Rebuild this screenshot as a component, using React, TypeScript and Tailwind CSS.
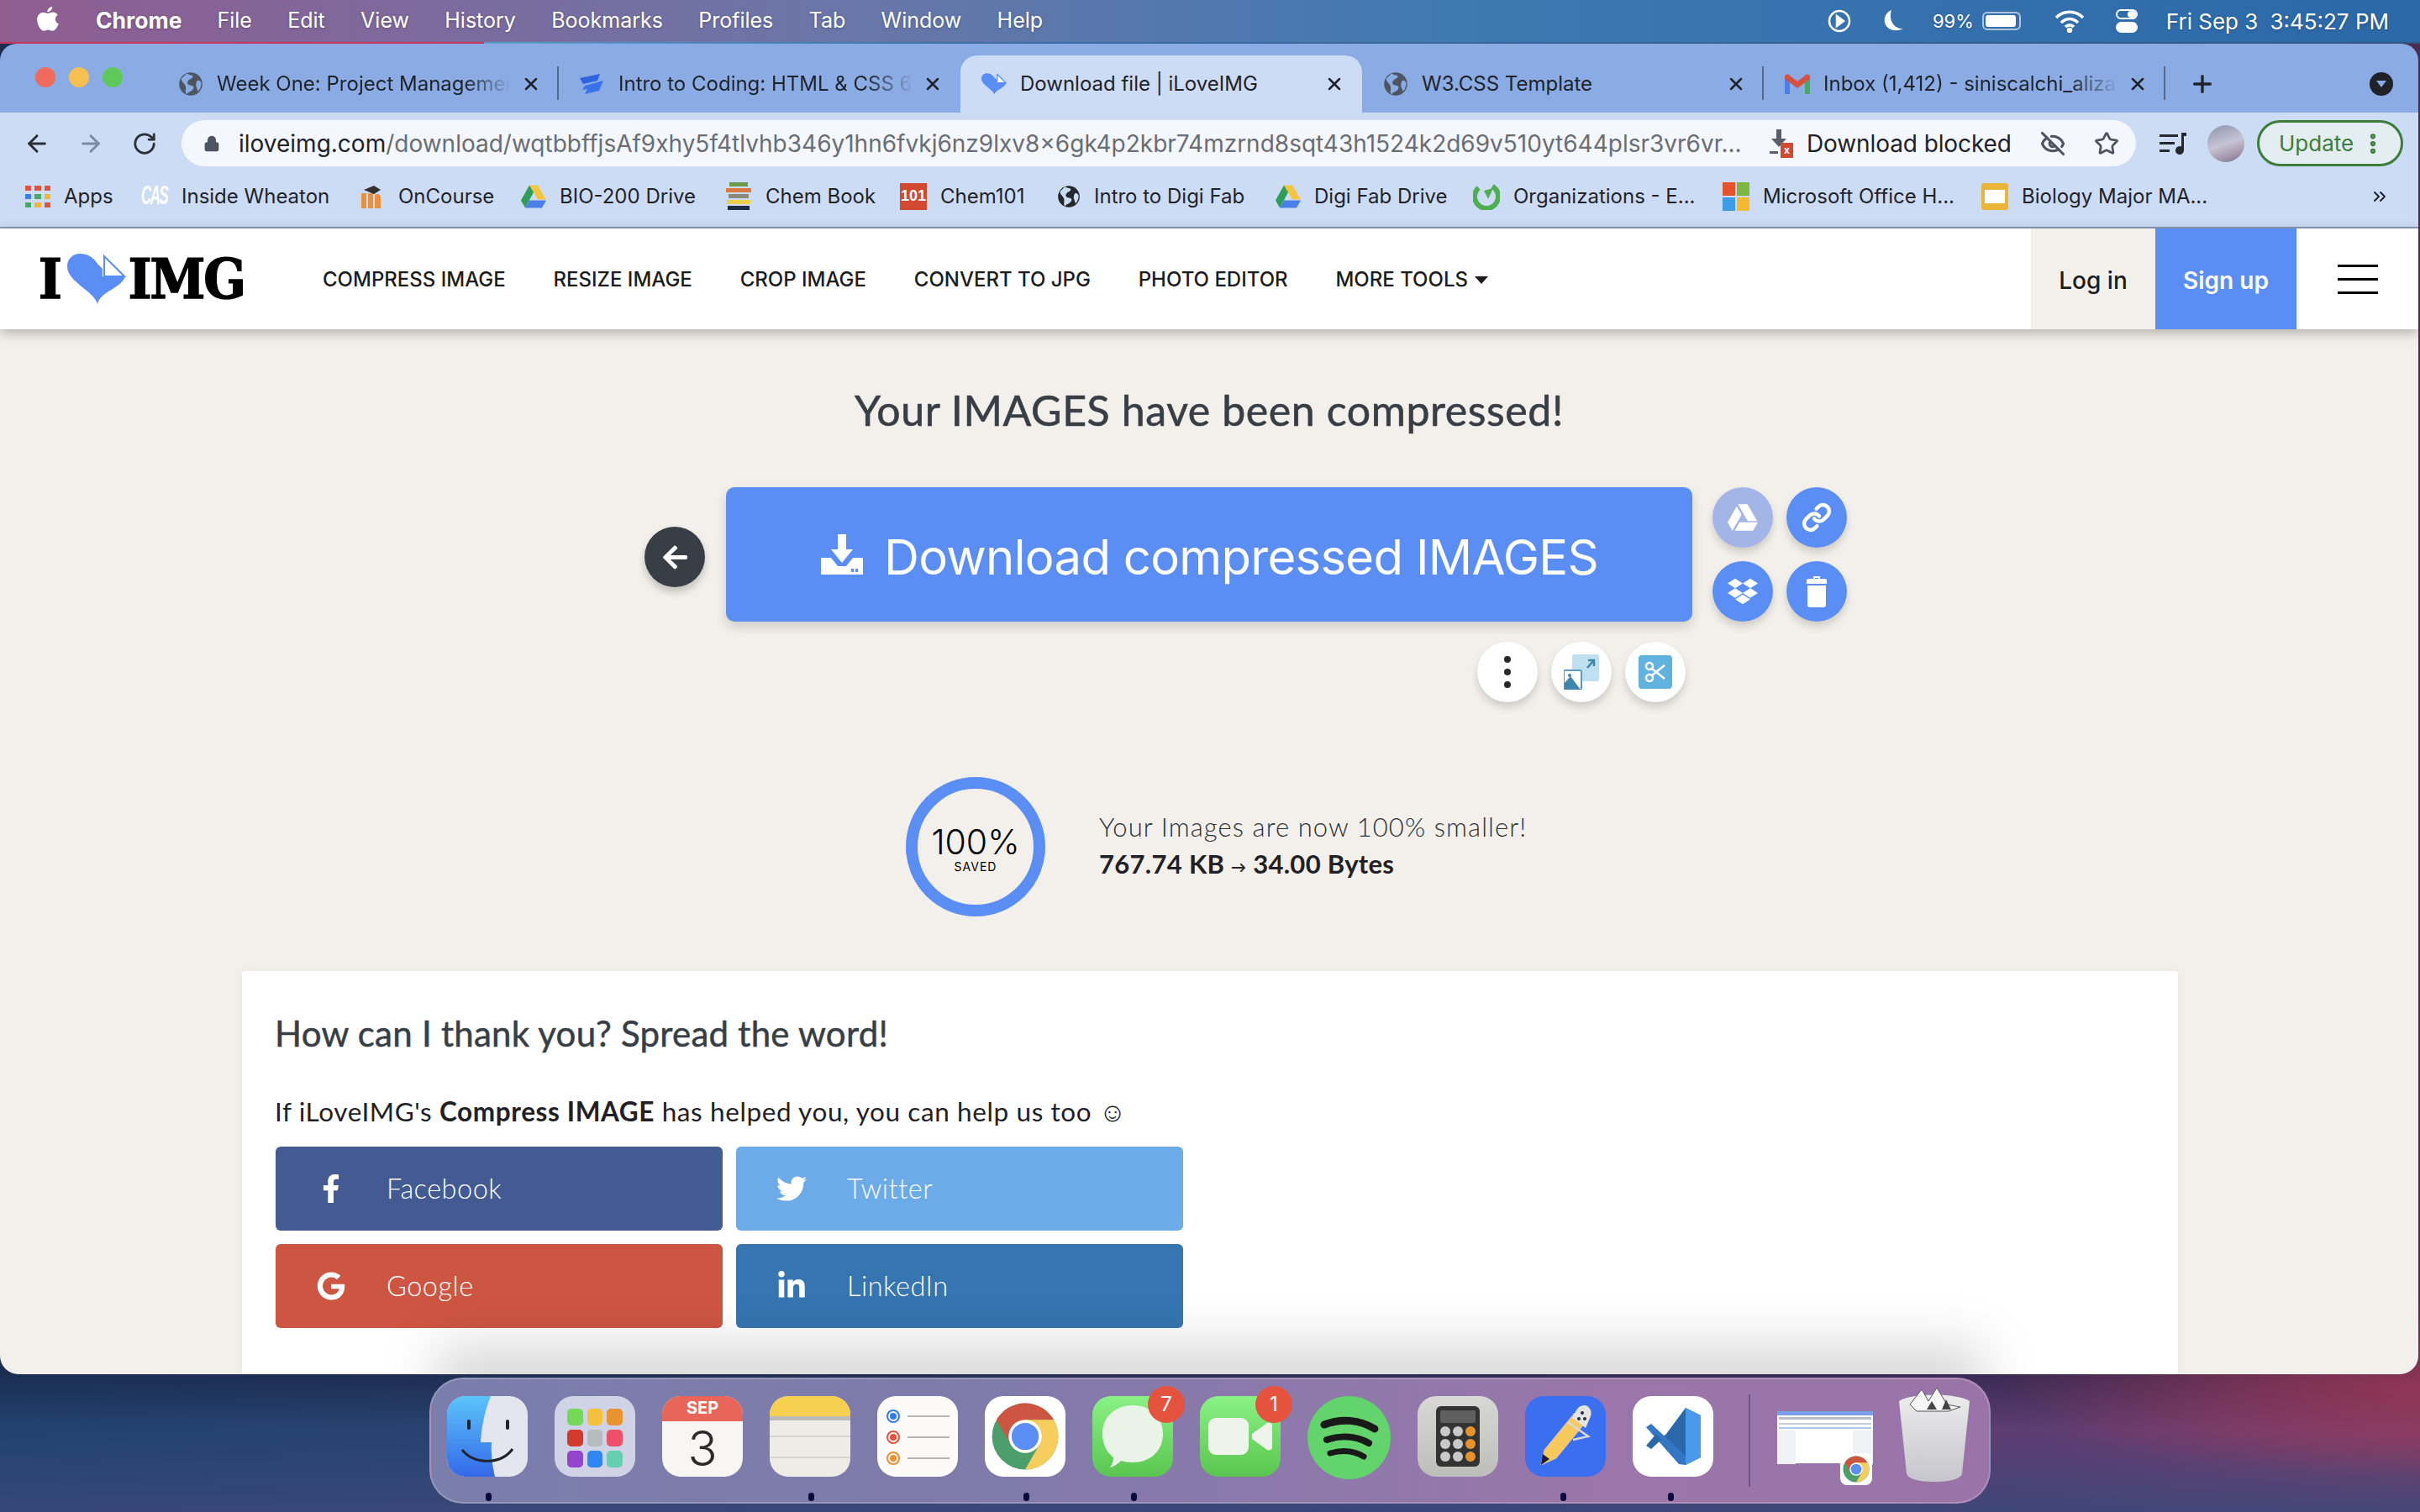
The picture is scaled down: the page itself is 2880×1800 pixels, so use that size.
import { ArrowLeft, ArrowRight, RotateCw, Lock, Star, EyeOff, X, Plus, ChevronsRight, MoreVertical, Link } from "lucide-react"
import { FaArrowLeft, FaDropbox, FaFacebookF, FaGoogle, FaGoogleDrive, FaLinkedinIn, FaTwitter } from "react-icons/fa"
import { ReactNode } from "react"

const Globe = ({ size = 30 }: { size?: number }) => (
    <svg width={size} height={size} viewBox="0 0 24 24" className="shrink-0">
        <circle cx="12" cy="12" r="11" fill="#4d5561" />
        <path d="M8 2c3 2 6 1 6 3s-4 2-5 5 3 3 5 4 0 4-2 5-3 1-4 3c-2-3 0-5-1-8S3 10 3 7c2-2 3-3 5-5zM18 9c2-1 3 0 4 2 0 3-1 6-3 8-1-2-1-3-2-5 0-2 0-3 1-5z" fill="#8aabe4" />
    </svg>
)

const GlobeDark = () => (
    <svg width="28" height="30" viewBox="0 0 24 24" className="shrink-0">
        <circle cx="12" cy="12" r="11" fill="#25282d" />
        <path d="M8 2c3 2 6 1 6 3s-4 2-5 5 3 3 5 4 0 4-2 5-3 1-4 3c-2-3 0-5-1-8S3 10 3 7c2-2 3-3 5-5zM18 9c2-1 3 0 4 2 0 3-1 6-3 8-1-2-1-3-2-5 0-2 0-3 1-5z" fill="#cddcf5" />
    </svg>
)

const Drive = () => (
    <svg width="30" height="28" viewBox="0 0 30 27" className="shrink-0">
        <path d="M10 0h10l10 17H20z" fill="#f5c542" />
        <path d="M10 0l5 8.500L5 27 0 18z" fill="#2f9e5b" />
        <path d="M5 27l5-9h20l-5 9z" fill="#4a7fe8" />
    </svg>
)

const Gmail = () => (
    <svg width="30" height="26" viewBox="0 0 30 24" className="shrink-0">
        <path d="M0 4v20h6V9z" fill="#4a7fe8" />
        <path d="M30 4v20h-6V9z" fill="#4aa866" />
        <path d="M0 3c1-3 4-3 6-1l9 7 9-7c2-2 5-2 6 1v3l-15 11L0 6z" fill="#d9503f" />
    </svg>
)

const WebflowIcon = () => (
    <svg width="30" height="24" viewBox="0 0 30 24" className="shrink-0">
        <path d="M0 5l24-5-3 8-17 4z" fill="#2f62dd" />
        <path d="M6 14l22-6-5 12-17 4 3-6-6 1z" fill="#3a72e8" />
    </svg>
)

const ChromeLogo = ({ size = 80 }: { size?: number }) => (
    <svg width={size} height={size} viewBox="0 0 48 48">
        <circle cx="24" cy="24" r="22" fill="#4c9f6a" />
        <path d="M4.950 13A22 22 0 0 1 43.050 13H24L14.470 29.500z" fill="#cd5642" />
        <path d="M43.050 13A22 22 0 0 1 24 46L33.530 29.500 24 13z" fill="#f7ce5e" />
        <circle cx="24" cy="24" r="11" fill="#fff" />
        <circle cx="24" cy="24" r="9" fill="#5b8ef5" />
    </svg>
)

function HeartSmall() {
    return (
        <svg width="30" height="28" viewBox="0 0 70 60" className="shrink-0">
            <path d="M36 60C32 44 0 34 0 15 0 6 7 0 15 0c9 0 16 4 21 12l6 6v9h27C64 42 40 44 36 60z" fill="#5b8ef5" />
            <path d="M44 3l24 24H44z" fill="#fff" stroke="#5b8ef5" strokeWidth="3" />
        </svg>
    )
}

const bookmarks: { label: string; icon: ReactNode; w: number }[] = [
    { label: "Apps", w: 138, icon: (
        <div className="grid grid-cols-3 gap-[4px] w-[30px] shrink-0">
            {["bg-[#e2513f]", "bg-[#e2513f]", "bg-[#e2513f]", "bg-[#3d7ee8]", "bg-[#4aa866]", "bg-[#f2b632]", "bg-[#4aa866]", "bg-[#f2b632]", "bg-[#e2513f]"].map((c, i) => (
                <div key={i} className={`h-[6px] ${c}`} />
            ))}
        </div>
    ) },
    { label: "Inside Wheaton", w: 257, icon: <span className="w-[32px] shrink-0 text-white font-bold italic text-[17px] leading-none font-['Liberation_Sans',sans-serif] tracking-[-1.500px] scale-y-[1.800]">CAS</span> },
    { label: "OnCourse", w: 195, icon: (
        <svg width="33" height="32" viewBox="0 0 33 32" className="shrink-0">
            <path d="M5 30V12h6v18zM13 30V12h6v18zM21 30V14c3-2 7-1 7 3v13z" fill="#e8903a" />
            <path d="M8 8l12-5 8 5-8 5z" fill="#33302d" />
        </svg>
    ) },
    { label: "BIO-200 Drive", w: 242, icon: <Drive /> },
    { label: "Chem Book", w: 209, icon: (
        <div className="flex flex-col gap-[2px] w-[33px] items-center shrink-0">
            <div className="h-[5px] w-[22px] bg-[#6a9a4a]" />
            <div className="h-[5px] w-[30px] bg-[#d9783f]" />
            <div className="h-[5px] w-[24px] bg-[#8a8a7a]" />
            <div className="h-[5px] w-[28px] bg-[#eccf4a]" />
            <div className="h-[5px] w-[26px] bg-[#1f2a44]" />
        </div>
    ) },
    { label: "Chem101", w: 187, icon: <span className="w-[32px] h-[32px] shrink-0 bg-[#d1492e] text-white font-bold text-[18px] flex items-center justify-center font-['Liberation_Sans',sans-serif]">101</span> },
    { label: "Intro to Digi Fab", w: 260, icon: <GlobeDark /> },
    { label: "Digi Fab Drive", w: 235, icon: <Drive /> },
    { label: "Organizations - E...", w: 297, icon: (
        <svg width="32" height="32" viewBox="0 0 32 32" className="shrink-0">
            <circle cx="16" cy="16" r="14" fill="none" stroke="#4fae4f" strokeWidth="6" strokeDasharray="70 18" transform="rotate(-60 16 16)" />
            <path d="M13 9l5 10 6-13z" fill="#4fae4f" />
        </svg>
    ) },
    { label: "Microsoft Office H...", w: 308, icon: (
        <div className="grid grid-cols-2 gap-[2px] w-[32px] shrink-0">
            <div className="h-[16px] bg-[#e5532d]" />
            <div className="h-[16px] bg-[#7db640]" />
            <div className="h-[16px] bg-[#3e9be8]" />
            <div className="h-[16px] bg-[#f5b92e]" />
        </div>
    ) },
    { label: "Biology Major MA...", w: 0, icon: (
        <div className="w-[32px] h-[32px] shrink-0 rounded-[3px] bg-[#e9b63a] flex items-center justify-center">
            <div className="w-[24px] h-[16px] bg-white" />
        </div>
    ) },
]

const tabs: { title: string; icon: ReactNode; active?: boolean; fade?: boolean; sep?: boolean }[] = [
    { title: "Week One: Project Managemer", icon: <Globe />, fade: true, sep: true },
    { title: "Intro to Coding: HTML & CSS 6", icon: <WebflowIcon />, fade: true },
    { title: "Download file | iLoveIMG", icon: <HeartSmall />, active: true },
    { title: "W3.CSS Template", icon: <Globe />, sep: true },
    { title: "Inbox (1,412) - siniscalchi_aliza", icon: <Gmail />, fade: true, sep: true },
]

const navLinks = ["COMPRESS IMAGE", "RESIZE IMAGE", "CROP IMAGE", "CONVERT TO JPG", "PHOTO EDITOR"]

const socials = [
    { label: "Facebook", bg: "bg-[#435a92]", icon: <FaFacebookF size={34} /> },
    { label: "Twitter", bg: "bg-[#6babe8]", icon: <FaTwitter size={36} /> },
    { label: "Google", bg: "bg-[#cd5642]", icon: <FaGoogle size={34} /> },
    { label: "LinkedIn", bg: "bg-[#3675b0]", icon: <FaLinkedinIn size={36} /> },
]

function MenuBar() {
    const items = ["File", "Edit", "View", "History", "Bookmarks", "Profiles", "Tab", "Window", "Help"]
    return (
        <div className="h-[52px] pb-[2px] shrink-0 relative flex items-center text-white text-[25px] font-['Inter',sans-serif] bg-[linear-gradient(90deg,#905d91_0%,#6a76a8_35%,#3f79b2_60%,#2b68a8_100%)] [text-shadow:0_1px_3px_rgba(0,0,0,0.25)]">
            <svg width="26" height="32" viewBox="0 0 24 30" className="ml-[44px] mb-[4px]" fill="#fff">
                <path d="M17 1c0 3-3 6-5.500 6C11 4 14 1 17 1zM12 8.500c1.500 0 3-1.500 5.500-1.500 2 0 4 1 5.500 3-4 2.500-3.500 8 1 10-1 3-4 8-7 8-2 0-2.500-1.200-4.700-1.200S9.500 28 7.500 28C4 28 0 21 0 15.500 0 10 3.500 7.200 7 7.200c2 0 3.500 1.300 5 1.300z" />
            </svg>
            <span className="ml-[44px] font-bold text-[26.500px]">Chrome</span>
            <div className="flex ml-[42px] gap-[42.300px]">
                {items.map((m) => <span key={m}>{m}</span>)}
            </div>
            <div className="ml-auto flex items-center mr-[37px] text-[26px]">
                <svg width="28" height="28" viewBox="0 0 28 28" fill="none" stroke="#fff" strokeWidth="2.500"><circle cx="14" cy="14" r="12" /><path d="M11 8l8 6-8 6z" fill="#fff" /></svg>
                <svg width="26" height="28" viewBox="0 0 26 28" fill="#fff" className="ml-[38px]"><path d="M10 1C3 4 1 10 2 16c2 8 12 12 22 7C14 24 6 14 10 1z" /></svg>
                <span className="ml-[33px] text-[22px]">99%</span>
                <div className="ml-[10px] w-[46px] h-[22px] border-2 border-white/60 rounded-[6px] p-[2px]"><div className="h-full w-[36px] bg-white rounded-[3px]" /></div>
                <svg width="36" height="28" viewBox="0 0 36 28" fill="none" stroke="#fff" strokeWidth="3.500" className="ml-[40px]"><path d="M2 10c9-9 23-9 32 0M8 16c6-6 14-6 20 0M13 21c3-3 7-3 10 0" /><circle cx="18" cy="25" r="1.500" fill="#fff" /></svg>
                <div className="ml-[37px] flex flex-col gap-[3px]">
                    <div className="w-[26px] h-[12px] rounded-full border-2 border-white flex justify-end"><div className="w-[10px] h-full bg-white rounded-full" /></div>
                    <div className="w-[26px] h-[13px] rounded-full bg-white" />
                </div>
                <span className="ml-[34px]">Fri Sep 3</span>
                <span className="ml-[14px]">3:45:27 PM</span>
            </div>
            <div className="absolute left-0 right-0 bottom-0 h-[2px] bg-[linear-gradient(90deg,#c8345c_0%,#c8345c_20%,#59a0cf_20%,#3a6ea5_40%,#33547f_100%)]" />
        </div>
    )
}

function TabStrip() {
    return (
        <div className="h-[82px] shrink-0 bg-[#8aabe4] flex items-end text-[#1f2329] text-[24px] font-['Inter',sans-serif]">
            <div className="w-[187px] h-full flex items-center gap-[16px] pl-[42px] pb-[2px] shrink-0">
                <div className="w-[24px] h-[24px] rounded-full bg-[#f06a5c]" />
                <div className="w-[24px] h-[24px] rounded-full bg-[#f6bf4f]" />
                <div className="w-[24px] h-[24px] rounded-full bg-[#5fc85a]" />
            </div>
            {tabs.map((t) => (
                <div key={t.title} className={`w-[478px] h-[68px] shrink-0 flex items-center pl-[25px] pr-[21px] rounded-t-[20px] relative ${t.active ? "bg-[#cddcf5]" : ""}`}>
                    <div className="w-[46px] shrink-0">{t.icon}</div>
                    <span className={`w-[358px] whitespace-nowrap overflow-hidden ${t.fade ? "[mask-image:linear-gradient(90deg,#000_82%,transparent_98%)]" : ""}`}>{t.title}</span>
                    <X size={24} strokeWidth={2.500} className="ml-auto shrink-0" />
                    {t.sep && <div className="absolute right-0 top-[13px] h-[40px] w-[2px] bg-[#55678a]" />}
                </div>
            ))}
            <div className="flex-1 h-[68px] flex items-center">
                <Plus size={32} strokeWidth={2.500} className="ml-[28px]" />
                <div className="ml-auto mr-[30px] w-[28px] h-[28px] rounded-full bg-[#1f2329] flex items-center justify-center">
                    <div className="w-0 h-0 border-x-[6px] border-x-transparent border-t-[8px] border-t-[#8aabe4]" />
                </div>
            </div>
        </div>
    )
}

function Toolbar() {
    return (
        <div className="h-[69px] pt-[9px] pb-[5px] shrink-0 bg-[#cddcf5] flex items-center font-['Inter',sans-serif] text-[28px]">
            <ArrowLeft size={32} strokeWidth={2.200} className="ml-[28px] text-[#2b2f36]" />
            <ArrowRight size={32} strokeWidth={2.200} className="ml-[32px] text-[#7d8aa3]" />
            <RotateCw size={30} strokeWidth={2.200} className="ml-[33px] text-[#2b2f36]" />
            <div className="ml-[29px] w-[2326px] h-[55px] bg-[#f4f7fd] rounded-full flex items-center">
                <Lock size={20} fill="#4d5561" className="ml-[26px] text-[#4d5561]" />
                <span className="ml-[22px] w-[1788px] whitespace-nowrap overflow-hidden text-[#6a6d72]"><span className="text-[#1f2329]">iloveimg.com</span>/download/wqtbbffjsAf9xhy5f4tlvhb346y1hn6fvkj6nz9lxv8x6gk4p2kbr74mzrnd8sqt43h1524k2d69v510yt644plsr3vr6vr...</span>
                <div className="ml-[34px] relative w-[28px] h-[34px]">
                    <svg width="22" height="32" viewBox="0 0 22 32" fill="#5a5e66"><path d="M8 0h6v11h6L11 21 2 11h6zM0 26h10v3H0z" /></svg>
                    <div className="absolute right-0 bottom-0 w-[15px] h-[18px] bg-[#d1492e] text-white text-[12px] leading-[18px] text-center font-bold">x</div>
                </div>
                <span className="ml-[16px] text-[#1f2329] tracking-[-0.100px]">Download blocked</span>
                <EyeOff size={30} strokeWidth={2.500} className="ml-[34px] text-[#4d5561]" />
                <Star size={30} strokeWidth={2.200} className="ml-[34px] text-[#4d5561]" />
            </div>
            <svg width="34" height="26" viewBox="0 0 34 26" fill="#25282d" className="ml-[28px]">
                <path d="M0 2h22v3H0zM0 11h18v3H0zM0 20h12v3H0zM26 0h6v4h-3v17a5 5 0 1 1-3-4.500z" />
            </svg>
            <div className="ml-[23px] w-[44px] h-[44px] rounded-full bg-[linear-gradient(160deg,#8b92ad_0%,#c7c4d4_50%,#a89aae_75%,#6f7290_100%)]" />
            <div className="ml-[15px] w-[174px] h-[55px] rounded-full border-[3px] border-[#3c7d3c] bg-[#e4edf2] flex items-center text-[#3c7d3c] text-[26px]">
                <span className="ml-[23px]">Update</span>
                <MoreVertical size={30} strokeWidth={3} className="ml-[8px]" />
            </div>
        </div>
    )
}

function BookmarksBar() {
    return (
        <div className="h-[69px] shrink-0 bg-[#cddcf5] flex items-center pl-[30px] pb-[6px] font-['Inter',sans-serif] text-[24px] text-[#1f2329] border-b-2 border-[#8e9ab0]">
            {bookmarks.map((b) => (
                <div key={b.label} className="flex items-center gap-[16px] shrink-0" style={b.w ? { width: b.w } : undefined}>
                    {b.icon}
                    <span className="whitespace-nowrap">{b.label}</span>
                </div>
            ))}
            <ChevronsRight size={24} className="ml-auto mr-[34px]" />
        </div>
    )
}

function SiteNav() {
    return (
        <div className="h-[120px] shrink-0 bg-white flex items-stretch relative z-10 shadow-[0_4px_14px_rgba(0,0,0,0.28)] text-[#1c1c1c]">
            <div className="w-[384px] shrink-0 flex items-center pl-[46px]">
                <div className="flex items-center font-['DejaVu_Serif_Condensed','DejaVu_Serif',serif] font-black text-black text-[66px] leading-none tracking-[-2px] [-webkit-text-stroke:1.500px_black]">
                    <span>I</span>
                    <svg width="70" height="60" viewBox="0 0 70 60" className="ml-[8px] mr-[3px]">
                        <path d="M36 60C32 44 0 34 0 15 0 6 7 0 15 0c9 0 16 4 21 12l6 6v9h27C64 42 40 44 36 60z" fill="#5b8ef5" />
                        <path d="M44 3l24 24H44z" fill="#fff" stroke="#5b8ef5" strokeWidth="2" />
                    </svg>
                    <span>IMG</span>
                </div>
            </div>
            <div className="flex items-center gap-[56.800px] pt-[2px] font-['Inter',sans-serif] text-[24px] font-medium">
                {navLinks.map((n) => <span key={n}>{n}</span>)}
                <span className="flex items-center gap-[8px]">MORE TOOLS<span className="w-0 h-0 border-x-[8px] border-x-transparent border-t-[9px] border-t-[#1c1c1c]" /></span>
            </div>
            <div className="ml-auto w-[148px] pt-[3px] bg-[#f3f0eb] flex items-center justify-center font-['Inter',sans-serif] text-[28px] font-medium">Log in</div>
            <div className="w-[168px] pt-[3px] bg-[#5b8ef5] text-white flex items-center justify-center font-['Inter',sans-serif] text-[28px] font-semibold">Sign up</div>
            <div className="w-[145px] flex flex-col items-center justify-center gap-[13px]">
                <div className="w-[48px] h-[3px] bg-black" />
                <div className="w-[48px] h-[3px] bg-black" />
                <div className="w-[48px] h-[3px] bg-black" />
            </div>
        </div>
    )
}

const blueCircle = "w-[72px] h-[72px] rounded-full flex items-center justify-center text-white shadow-[0_6px_10px_rgba(0,0,0,0.15)]"
const whiteCircle = "w-[72px] h-[72px] rounded-full bg-white flex items-center justify-center shadow-[0_6px_10px_rgba(0,0,0,0.15)]"

function Content() {
    return (
        <div className="flex-1 min-h-0 bg-[#f3f0eb] relative overflow-hidden font-['Lato',sans-serif]">
            <h1 className="pt-[68px] text-center text-[50px] leading-[56px] font-normal text-[#383e45] tracking-[0.6px] [-webkit-text-stroke:0.6px_#383e45]">Your IMAGES have been compressed!</h1>
            <div className="mt-[64px] ml-[767px] flex items-center">
                <div className="mt-[6px] w-[72px] h-[72px] rounded-full bg-[#383e45] text-white flex items-center justify-center shadow-[0_6px_10px_rgba(0,0,0,0.2)]"><FaArrowLeft size={33} /></div>
                <div className="ml-[25px] w-[1150px] h-[160px] rounded-[10px] bg-[#5b8ef5] text-white flex items-center pl-[113px] shadow-[0_6px_14px_rgba(0,0,0,0.15)]">
                    <svg width="50" height="48" viewBox="0 0 50 48" fill="#fff">
                        <path d="M20 0h10v18h8L25 34 12 18h8z" />
                        <path d="M0 28h12l8 10h10l8-10h12v20H0z" />
                        <rect x="36" y="41" width="3" height="4" fill="#5b8ef5" />
                        <rect x="41" y="41" width="3" height="4" fill="#5b8ef5" />
                    </svg>
                    <span className="ml-[25px] pt-[6px] text-[58px] font-['Inter',sans-serif] whitespace-nowrap tracking-[-0.7px]">Download compressed IMAGES</span>
                </div>
                <div className="ml-[24px] grid grid-cols-2 gap-[16px]">
                    <div className={`${blueCircle} bg-[#a3b5e6]`}><FaGoogleDrive size={36} /></div>
                    <div className={`${blueCircle} bg-[#5b8ef5]`}><Link size={36} strokeWidth={3} /></div>
                    <div className={`${blueCircle} bg-[#5b8ef5]`}><FaDropbox size={36} /></div>
                    <div className={`${blueCircle} bg-[#5b8ef5]`}>
                        <svg width="26" height="37" viewBox="0 0 26 37" fill="#fff">
                            <path d="M9 0h8v3h-2V2h-4v1H9z" />
                            <path d="M1 5a2 2 0 0 1 2-2h20a2 2 0 0 1 2 2v4H1z" />
                            <path d="M2 11h22v23a3 3 0 0 1-3 3H5a3 3 0 0 1-3-3z" />
                        </svg>
                    </div>
                </div>
            </div>
            <div className="mt-[24px] ml-[1758px] flex gap-[16px]">
                <div className={whiteCircle}>
                    <div className="flex flex-col gap-[7px]">
                        <div className="w-[8px] h-[8px] rounded-full bg-[#25282d]" />
                        <div className="w-[8px] h-[8px] rounded-full bg-[#25282d]" />
                        <div className="w-[8px] h-[8px] rounded-full bg-[#25282d]" />
                    </div>
                </div>
                <div className={whiteCircle}>
                    <svg width="42" height="42" viewBox="0 0 42 42">
                        <rect x="10" y="0" width="32" height="32" rx="3" fill="#bfe0f0" />
                        <path d="M28 16l7-8M29 7h7v7" stroke="#3f86ad" strokeWidth="2.500" fill="none" />
                        <rect x="0" y="19" width="21" height="23" rx="2" fill="#fff" stroke="#5b9cc0" strokeWidth="2" />
                        <path d="M1 42V34l7-8 12 16z" fill="#3f86ad" />
                        <circle cx="7" cy="25" r="2" fill="#3f86ad" />
                    </svg>
                </div>
                <div className={whiteCircle}>
                    <div className="w-[40px] h-[40px] rounded-[4px] bg-[#5fb3de] flex items-center justify-center">
                        <svg width="28" height="28" viewBox="0 0 28 28" fill="none" stroke="#fff" strokeWidth="2.500">
                            <circle cx="7" cy="7" r="4" /><circle cx="7" cy="21" r="4" />
                            <path d="M10 10l15 12M10 18l15-12" />
                        </svg>
                    </div>
                </div>
            </div>
            <div className="mt-[89px] ml-[1078px] flex items-center">
                <div className="w-[166px] h-[166px] rounded-full border-[14px] border-[#5b8ef5] flex flex-col items-center justify-center text-black font-['Inter',sans-serif] shrink-0">
                    <span className="text-[41px] leading-[44px] mt-[4px] font-light">100%</span>
                    <span className="text-[14px] leading-[16px] tracking-[1px]">SAVED</span>
                </div>
                <div className="ml-[64px] text-[31px] leading-[44px] text-[#2c2f33]">
                    <p className="font-light tracking-[1.100px]">Your Images are now 100% smaller!</p>
                    <p className="font-bold text-[#1f2126] tracking-[0.3px]">767.74 KB <span className="text-[18px] align-middle">→</span> 34.00 Bytes</p>
                </div>
            </div>
            <div className="mt-[65px] mx-[288px] w-[2304px] h-[700px] rounded-[4px] bg-white pl-[39px] pt-[48px] shadow-[0_0_14px_rgba(0,0,0,0.04)]">
                <h2 className="text-[42px] leading-[52px] text-[#383e45] tracking-[0.25px] [-webkit-text-stroke:0.5px_#383e45]">How can I thank you? Spread the word!</h2>
                <p className="mt-[47px] text-[31.500px] leading-[40px] text-[#1f2126] tracking-[0.6px]">If iLoveIMG's <strong className="font-bold">Compress IMAGE</strong> has helped you, you can help us too ☺</p>
                <div className="mt-[22px] ml-[1px] grid grid-cols-[532px_532px] gap-x-[16px] gap-y-[16px]">
                    {socials.map((s) => (
                        <div key={s.label} className={`h-[100px] rounded-[6px] ${s.bg} text-white flex items-center`}>
                            <div className="w-[132px] flex justify-center">{s.icon}</div>
                            <span className="text-[32.500px] font-light tracking-[0.5px]">{s.label}</span>
                        </div>
                    ))}
                </div>
            </div>
            <div className="absolute left-[520px] w-[1840px] bottom-[-55px] h-[90px] bg-black/15 blur-[30px]" />
        </div>
    )
}

const AppTile = ({ className, children, badge }: { className: string; children?: ReactNode; badge?: string }) => (
    <div className={`relative w-[96px] h-[96px] shrink-0 rounded-[22px] ${className}`}>
        {children}
        {badge && <div className="absolute right-[-14px] top-[-12px] w-[44px] h-[44px] rounded-full bg-[#e5533f] text-white text-[24px] flex items-center justify-center font-['Inter',sans-serif]">{badge}</div>}
    </div>
)

const dockDots = [65, 449, 705, 833, 1344, 1472]

function Dock() {
    const launch = ["bg-[#74d957]", "bg-[#f5c13c]", "bg-[#e89230]", "bg-[#d23a2c]", "bg-[#b4bcc0]", "bg-[#ee5068]", "bg-[#9246cc]", "bg-[#2f86f0]", "bg-[#66cfb0]"]
    return (
        <div className="mt-[4px] ml-[511px] w-[1858px] h-[150px] relative rounded-[40px] border-2 border-white/20 bg-[linear-gradient(90deg,#7a7eac_0%,#7f7bab_35%,#9a76aa_75%,#9a74a8_100%)] flex items-start pl-[19px] pt-[20px] gap-[32px]">
            <AppTile className="overflow-hidden">
                <svg width="96" height="96" viewBox="0 0 96 96">
                    <defs><linearGradient id="fd" x1="0" y1="0" x2="0" y2="1"><stop offset="0" stopColor="#5cc4fa" /><stop offset="1" stopColor="#3468e8" /></linearGradient></defs>
                    <rect width="96" height="96" fill="#e3e6ee" />
                    <path d="M0 0h52C44 20 41 38 40 55h13c-1 14 1 28 4 41H0z" fill="url(#fd)" />
                    <rect x="24" y="28" width="4" height="12" rx="2" fill="#20242c" />
                    <rect x="70" y="28" width="4" height="12" rx="2" fill="#20242c" />
                    <path d="M18 64c14 18 46 18 60-1" stroke="#20242c" strokeWidth="3" fill="none" />
                </svg>
            </AppTile>
            <AppTile className="bg-[#d0d3e5] p-[15px]">
                <div className="grid grid-cols-3 gap-[5px]">
                    {launch.map((c, i) => <div key={i} className={`h-[20px] rounded-[5px] ${c}`} />)}
                </div>
            </AppTile>
            <AppTile className="bg-[#f7f6f3] overflow-hidden flex flex-col items-center">
                <div className="w-full h-[30px] bg-[#e8655a] text-white font-bold text-[20px] leading-[28px] text-center font-['Inter',sans-serif]">SEP</div>
                <span className="text-[58px] leading-[64px] font-light text-[#2b2b2b] font-['Inter',sans-serif]">3</span>
            </AppTile>
            <AppTile className="bg-[#eeece7] overflow-hidden">
                <div className="h-[24px] bg-[#f7cf50]" />
                <div className="h-[5px] bg-[#bdbbb5]" />
                <div className="mt-[18px] h-[2px] bg-[#d7d5d0]" />
                <div className="mt-[23px] h-[2px] bg-[#d7d5d0]" />
            </AppTile>
            <AppTile className="bg-[#fbfaf8] pl-[11px] pt-[16px]">
                <div className="flex flex-col gap-[9px]">
                    {["#2f7bf0", "#e5533f", "#e89230"].map((c) => (
                        <div key={c} className="flex items-center gap-[9px]">
                            <div className="w-[16px] h-[16px] rounded-full border-2 p-[2px]" style={{ borderColor: c }}><div className="w-full h-full rounded-full" style={{ backgroundColor: c }} /></div>
                            <div className="w-[50px] h-[2px] bg-[#b5b5b5]" />
                        </div>
                    ))}
                </div>
            </AppTile>
            <AppTile className="bg-white flex items-center justify-center"><ChromeLogo size={86} /></AppTile>
            <AppTile badge="7" className="bg-[linear-gradient(180deg,#8af285,#5ac54f)] flex items-center justify-center">
                <svg width="72" height="74" viewBox="0 0 72 74"><path d="M36 0c20 0 36 13 36 34S56 68 36 68c-5 0-10-1-14-2-3 3-8 7-13 8 3-4 4-8 4-12C5 56 0 46 0 34 0 13 16 0 36 0z" fill="#eaf3e8" /></svg>
            </AppTile>
            <AppTile badge="1" className="bg-[linear-gradient(180deg,#8af285,#5ac54f)] flex items-center justify-center">
                <svg width="76" height="44" viewBox="0 0 76 44" fill="#eef3ec"><rect width="48" height="44" rx="9" /><path d="M52 19l18-13c2-1 6 0 6 3v26c0 3-4 4-6 3L52 25z" /></svg>
            </AppTile>
            <div className="w-[99px] h-[99px] shrink-0 rounded-full bg-[#63d36c] flex items-center justify-center">
                <svg width="70" height="56" viewBox="0 0 70 56" fill="none" stroke="#191919" strokeLinecap="round">
                    <path d="M5 12c20-8 42-6 60 5" strokeWidth="9" />
                    <path d="M8 30c18-6 36-4 50 4" strokeWidth="8" />
                    <path d="M12 46c14-4 28-3 40 4" strokeWidth="7" />
                </svg>
            </div>
            <AppTile className="bg-[linear-gradient(180deg,#d8d8d6,#bdbdbb)] flex items-center justify-center">
                <div className="w-[52px] h-[72px] rounded-[6px] bg-[#333] p-[5px]">
                    <div className="h-[15px] bg-[#5f5f5f] rounded-[2px]" />
                    <div className="mt-[4px] grid grid-cols-3 gap-[3px]">
                        {["#c9c9c9", "#c9c9c9", "#e8922e", "#c9c9c9", "#c9c9c9", "#e8922e", "#c9c9c9", "#c9c9c9", "#e8922e"].map((c, i) => (
                            <div key={i} className="h-[12px] rounded-full" style={{ backgroundColor: c }} />
                        ))}
                    </div>
                </div>
            </AppTile>
            <AppTile className="bg-[#3b6ff0] flex items-center justify-center">
                <svg width="66" height="76" viewBox="0 0 66 76">
                    <path d="M44 10l14 10-36 44-18 8 4-18z" fill="#f7c95c" stroke="#c9c9c9" strokeWidth="1" />
                    <path d="M4 72l2-13 8 6z" fill="#1c1c2c" />
                    <path d="M41 16l16 12 6-14c2-6-1-12-7-13-4 0-8 2-10 6z" fill="#e4e4e4" />
                    <circle cx="53" cy="10" r="2" fill="#2c2c3c" /><circle cx="49" cy="17" r="2" fill="#2c2c3c" /><circle cx="56" cy="17" r="2" fill="#2c2c3c" />
                    <path d="M36 21l24 17-18 4" stroke="#d8d8d8" strokeWidth="2.500" fill="none" />
                </svg>
            </AppTile>
            <AppTile className="bg-white flex items-center justify-center">
                <svg width="70" height="72" viewBox="0 0 70 72">
                    <path d="M50 2l18 9v50l-18 9-32-29 9-8z" fill="#2b67ab" />
                    <path d="M50 2l18 9v50l-18 9z" fill="#4a9aeb" />
                    <path d="M3 25l6-4 41 38v11l-8-1z" fill="#3376c4" />
                    <path d="M3 47l6 4 12-11-6-7z" fill="#2b67ab" />
                </svg>
            </AppTile>
            <div className="absolute left-[1568px] top-[18px] w-[2px] h-[110px] bg-[#6a5390]" />
            <div className="absolute left-[1602px] top-[38px] w-[114px] h-[62px] bg-white">
                <div className="h-[5px] bg-[#7aa0e8]" />
                <div className="h-[3px] mt-[2px] mx-[2px] bg-[#b6bec9]" />
                <div className="h-[2px] mt-[4px] mx-[2px] bg-[#c9ced6]" />
                <div className="h-[2px] mt-[3px] mx-[2px] bg-[#a9cbf0]" />
                <div className="mt-[2px] flex h-[40px]"><div className="w-[22px] bg-[#f0f2f5]" /><div className="flex-1" /><div className="w-[24px] bg-[#f0f2f5]" /></div>
            </div>
            <div className="absolute left-[1677px] top-[88px] w-[38px] h-[38px] bg-white rounded-[8px] flex items-center justify-center"><ChromeLogo size={34} /></div>
            <div className="absolute left-[1746px] top-[10px]">
                <svg width="86" height="112" viewBox="0 0 86 112">
                    <defs><linearGradient id="tr" x1="0" y1="0" x2="0" y2="1"><stop offset="0" stopColor="#ececec" /><stop offset="1" stopColor="#c6c5cc" /></linearGradient></defs>
                    <path d="M1 16c14-10 70-10 84 0l-9 86c-1 7-16 10-33 10s-32-3-33-10z" fill="url(#tr)" />
                    <path d="M14 20l14-18 8 14 10-16 12 20c10 2 16 3 16 3L60 28H22z" fill="#f6f6f6" stroke="#555" strokeWidth="1" />
                    <path d="M34 26l6-10 6 10zM52 26l5-12 6 12z" fill="#444" />
                </svg>
            </div>
            {dockDots.map((x) => (
                <div key={x} className="absolute top-[135px] w-[7px] h-[10px] rounded-full bg-[#0c0b40]" style={{ left: x }} />
            ))}
        </div>
    )
}

export default function App() {
    return (
        <div className="w-[2880px] h-[1800px] overflow-hidden flex flex-col bg-[radial-gradient(500px_110px_at_2880px_1650px,rgba(165,55,85,0.75),transparent),linear-gradient(180deg,rgba(18,20,45,0.45)_1636px,rgba(18,20,45,0)_1700px,rgba(58,72,122,0)_1710px,rgba(58,72,122,0.85)_1800px),linear-gradient(90deg,#224370_0%,#2b4270_25%,#5d3d72_85%,#7b3f6a_100%)]">
            <MenuBar />
            <div className="w-[2878px] h-[1584px] shrink-0 flex flex-col overflow-hidden rounded-t-[20px] rounded-b-[22px]">
                <TabStrip />
                <Toolbar />
                <BookmarksBar />
                <SiteNav />
                <Content />
            </div>
            <Dock />
        </div>
    )
}
